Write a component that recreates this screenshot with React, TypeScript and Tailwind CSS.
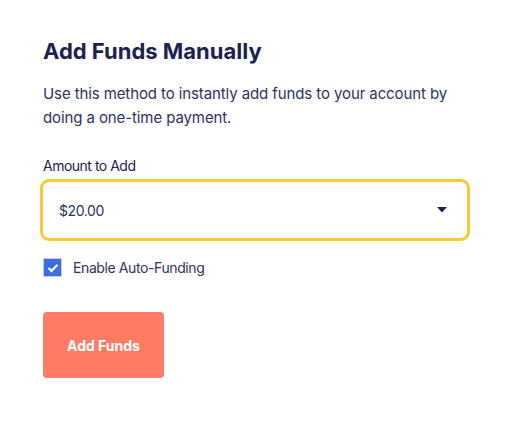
import React from 'react';

const App: React.FC = () => {
  return (
    <div
      className="w-[512px] h-[424px] bg-white px-[43px] pt-[37px] text-[#1c2250]"
      style={{ fontFamily: 'Inter, "Noto Sans", sans-serif' }}
    >
      <h2 className="text-[22px] leading-[28px] font-bold">Add Funds Manually</h2>
      <p className="mt-[17px] text-[15px] leading-[24px] tracking-[-0.1px] text-[#2c3363]">
        Use this method to instantly add funds to your account by doing a one-time payment.
      </p>

      <label className="block mt-[26px] text-[14px] leading-[20px] tracking-[-0.5px]">Amount to Add</label>
      <div className="mt-[3px] -ml-[3px] w-[430px] h-[62px] border-[3px] border-[#fcc934] rounded-[9px] flex items-center justify-between pl-[16px] pr-[20px]">
        <span className="text-[14px] tracking-[-0.4px] text-[#2c3363]">$20.00</span>
        <svg width="10" height="6" viewBox="0 0 10 6">
          <path d="M0 0 L10 0 L5 5.5 Z" fill="#1c2250" />
        </svg>
      </div>

      <div className="mt-[16px] flex items-center gap-[11px]">
        <span className="w-[19px] h-[19px] bg-[#3b6fe0] border border-[#c9cdd8] flex items-center justify-center">
          <svg width="12" height="10" viewBox="0 0 12 10">
            <path d="M1.5 5 L4.5 8 L10.5 1.8" stroke="white" strokeWidth="2.2" fill="none" />
          </svg>
        </span>
        <span className="text-[14px] tracking-[-0.4px] text-[#2c3363]">Enable Auto-Funding</span>
      </div>

      <button className="mt-[34px] w-[121px] h-[66px] bg-[#ff7b66] rounded-[4px] text-white text-[14px] font-bold">
        Add Funds
      </button>
    </div>
  );
};

export default App;
